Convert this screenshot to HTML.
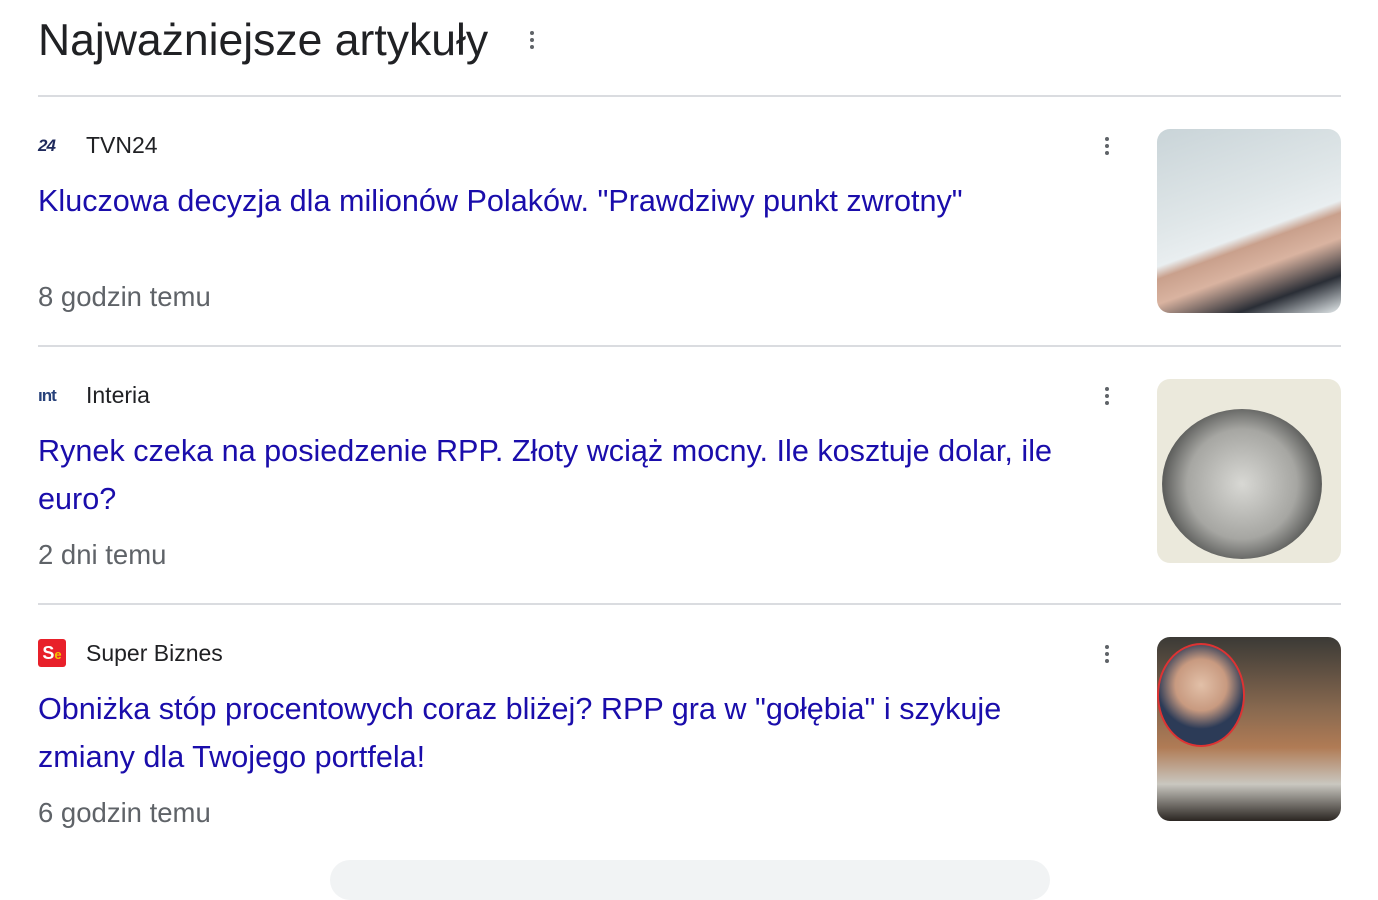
<!DOCTYPE html>
<html><head><meta charset="utf-8"><style>
body{margin:0;background:#fff;width:1378px;height:868px;overflow:hidden;font-family:"Liberation Sans",Arial,sans-serif;position:relative}
.t{position:absolute;left:38px;top:16px;font-size:44.5px;color:#202124}
.dots{position:absolute;width:4px}
.dots i{display:block;width:4px;height:4px;border-radius:50%;background:#5f6368;margin-bottom:3px}
.hr{position:absolute;left:38px;width:1303px;height:2px;background:#dadce0}
.src{position:absolute;left:86px;font-size:23px;color:#202124}
.logo{position:absolute;left:38px;width:28px;height:28px}
.h{position:absolute;left:38px;width:1080px;font-size:30.6px;line-height:48px;color:#1a0dab}
.tm{position:absolute;left:38px;font-size:27.5px;color:#5f6368}
.img{position:absolute;left:1157px;width:184px;height:184px;border-radius:13px;overflow:hidden}
</style></head><body>
<div class="t">Najważniejsze artykuły</div>
<div class="dots" style="left:530px;top:31px"><i></i><i></i><i></i></div>
<div class="hr" style="top:95px"></div>

<div class="logo" style="top:132px;font:italic bold 17px 'Liberation Sans';color:#1f2a5c;line-height:28px;letter-spacing:-1px">24</div>
<div class="src" style="top:132px">TVN24</div>
<div class="dots" style="left:1105px;top:137px"><i></i><i></i><i></i></div>
<div class="h" style="top:177px">Kluczowa decyzja dla milionów Polaków. "Prawdziwy punkt zwrotny"</div>
<div class="tm" style="top:281px">8 godzin temu</div>
<div class="img" style="top:129px;background:linear-gradient(160deg,#c9d4d8 0%,#dfe6e8 40%,#e9eef0 55%,#c9a08c 60%,#d9b3a0 70%,#2a2e36 85%,#e4eaec 100%)"></div>
<div class="hr" style="top:345px"></div>

<div class="logo" style="top:382px;font:bold 17px 'Liberation Sans';color:#27417a;line-height:28px;letter-spacing:-1px">ınt</div>
<div class="src" style="top:382px">Interia</div>
<div class="dots" style="left:1105px;top:387px"><i></i><i></i><i></i></div>
<div class="h" style="top:427px">Rynek czeka na posiedzenie RPP. Złoty wciąż mocny. Ile kosztuje dolar, ile euro?</div>
<div class="tm" style="top:539px">2 dni temu</div>
<div class="img" style="top:379px;background:#ebe9dc"><div style="position:absolute;left:5px;top:30px;width:160px;height:150px;border-radius:50%;background:radial-gradient(circle,#d8d8d4 0%,#a6a6a2 50%,#5d5e5c 72%,#c9c9c5 85%,#777 100%)"></div></div>
<div class="hr" style="top:603px"></div>

<div class="logo" style="top:639px;background:#e8202a;border-radius:3px;color:#fff;font:bold 18px 'Liberation Sans';line-height:28px;text-align:center">S<span style="color:#f5c400;font-size:13px">e</span></div>
<div class="src" style="top:640px">Super Biznes</div>
<div class="dots" style="left:1105px;top:645px"><i></i><i></i><i></i></div>
<div class="h" style="top:685px;width:1030px">Obniżka stóp procentowych coraz bliżej? RPP gra w "gołębia" i szykuje zmiany dla Twojego portfela!</div>
<div class="tm" style="top:797px">6 godzin temu</div>
<div class="img" style="top:637px;background:linear-gradient(180deg,#3b3a36 0%,#8a6a50 40%,#b07b55 60%,#c9c7c0 80%,#2b2622 100%)"><div style="position:absolute;left:0;top:6px;width:84px;height:100px;border-radius:50%;border:2px solid #d33;background:radial-gradient(circle at 50% 40%,#e2c0a8 0%,#c89a80 35%,#2c3b57 60%)"></div></div>
<div style="position:absolute;left:330px;top:860px;width:720px;height:40px;border-radius:20px;background:#f1f3f4"></div>
</body></html>
